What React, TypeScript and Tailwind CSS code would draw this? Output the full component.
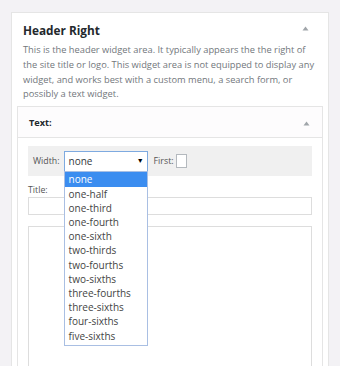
import React from "react";

const options = [
  "none",
  "one-half",
  "one-third",
  "one-fourth",
  "one-sixth",
  "two-thirds",
  "two-fourths",
  "two-sixths",
  "three-fourths",
  "three-sixths",
  "four-sixths",
  "five-sixths",
];

function Tri() {
  return (
    <svg width="7" height="5" viewBox="0 0 7 5" className="block">
      <path d="M3.5 0.5 L6.5 4.5 L0.5 4.5 Z" fill="#a0a5aa" />
    </svg>
  );
}

export default function App() {
  return (
    <div
      className="w-[340px] h-[366px] overflow-hidden bg-[#f3f2f5] pt-[12px] pl-[11px]"
      style={{ fontFamily: '"Open Sans", "Noto Sans", sans-serif' }}
    >
      <div className="w-[318px] h-[400px] bg-white border border-[#e5e5e5] px-[5px]">
        <div className="flex items-start justify-between pl-[6px] pr-[14px] pt-[7px]">
          <h2 className="text-[11.8px] leading-[20px] font-bold text-[#23282d]">Header Right</h2>
          <div className="pt-[6px]">
            <Tri />
          </div>
        </div>
        <p className="pl-[6px] pr-[6px] mt-[3px] text-[9.3px] leading-[14.8px] text-[#72777c]">
          This is the header widget area. It typically appears the the right of the site title or logo. This widget area is not equipped to display any widget, and works best with a custom menu, a search form, or possibly a text widget.
        </p>
        <div className="mt-[4px] border border-[#e5e5e5] h-[300px]">
          <div className="h-[31px] flex items-center justify-between pl-[11px] pr-[12px] pt-[2px] border-b border-[#e5e5e5] bg-[#fdfcfd]">
            <span className="text-[9.2px] font-bold text-[#23282d]">Text:</span>
            <Tri />
          </div>
          <div className="px-[10px] pt-[8px]">
            <div className="h-[30px] bg-[#f0f0f0] flex items-center pl-[5px]">
              <span className="text-[8.8px] text-[#555]">Width:</span>
              <div className="relative ml-[4px]">
                <div className="w-[84px] h-[21px] border border-[#7eaae0] bg-white flex items-center justify-between pl-[4px] pr-[3px]">
                  <span className="text-[10px] text-[#32373c]">none</span>
                  <span className="text-[7px] text-black">▼</span>
                </div>
                <div className="absolute left-0 top-[20px] w-[84px] bg-white border border-[#a9bfe3] z-10 pb-[2px]">
                  {options.map((o, i) => (
                    <div
                      key={o}
                      className={
                        i === 0
                          ? "h-[15px] leading-[15px] pl-[4px] text-[10px] bg-[#3b8df0] text-white"
                          : "h-[14.2px] leading-[14.2px] pl-[4px] text-[10px] text-[#444]"
                      }
                    >
                      {o}
                    </div>
                  ))}
                </div>
              </div>
              <span className="ml-[6px] text-[8.8px] text-[#555]">First:</span>
              <div className="ml-[2px] w-[11px] h-[14px] border border-[#b4b9be] bg-white" />
            </div>
            <div className="mt-[7px] text-[8.8px] text-[#555] leading-[14px]">Title:</div>
            <div className="h-[18px] border border-[#ddd] bg-white" />
            <div className="mt-[11px] h-[200px] border border-[#ddd] bg-white" />
          </div>
        </div>
      </div>
    </div>
  );
}
